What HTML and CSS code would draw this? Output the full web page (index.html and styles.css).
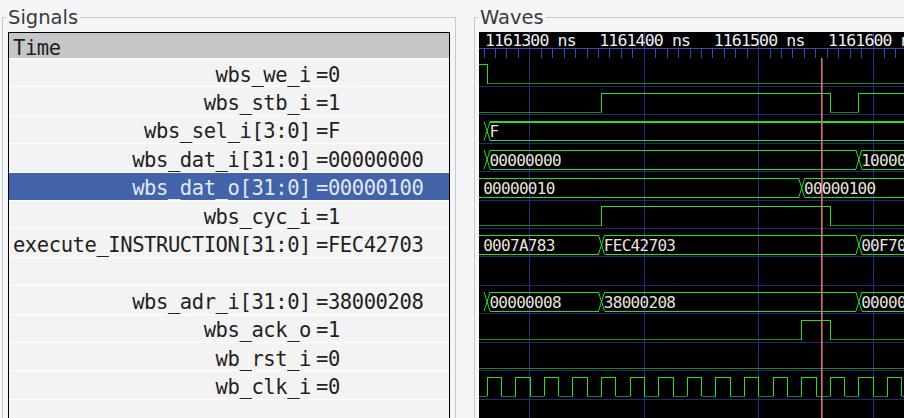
FILE: index.html
```html
<!DOCTYPE html>
<html>
<head>
<meta charset="utf-8">
<title>GTKWave</title>
<link rel="stylesheet" href="styles.css">
</head>
<body>
<div class="app">
  <fieldset class="frame signals">
    <legend>Signals</legend>
    <div class="list">
      <div class="hdr">Time</div>
      <div class="row"><span class="name">wbs_we_i</span><span class="val">=0</span></div>
      <div class="row"><span class="name">wbs_stb_i</span><span class="val">=1</span></div>
      <div class="row"><span class="name">wbs_sel_i[3:0]</span><span class="val">=F</span></div>
      <div class="row"><span class="name">wbs_dat_i[31:0]</span><span class="val">=00000000</span></div>
      <div class="row sel"><span class="name">wbs_dat_o[31:0]</span><span class="val">=00000100</span></div>
      <div class="row"><span class="name">wbs_cyc_i</span><span class="val">=1</span></div>
      <div class="row"><span class="name">execute_INSTRUCTION[31:0]</span><span class="val">=FEC42703</span></div>
      <div class="row"><span class="name"></span><span class="val"></span></div>
      <div class="row"><span class="name">wbs_adr_i[31:0]</span><span class="val">=38000208</span></div>
      <div class="row"><span class="name">wbs_ack_o</span><span class="val">=1</span></div>
      <div class="row"><span class="name">wb_rst_i</span><span class="val">=0</span></div>
      <div class="row"><span class="name">wb_clk_i</span><span class="val">=0</span></div>
      <div class="row"><span class="name"></span><span class="val"></span></div>
    </div>
  </fieldset>
  <fieldset class="frame waves">
    <legend>Waves</legend>
    <div class="wavebox">
      <svg class="wave" width="425" height="386" viewBox="479 32 425 386">
        <g shape-rendering="crispEdges">
          <path class="sep" d="M479 86.4H905M479 114.8H905M479 143.3H905M479 171.7H905M479 200.1H905M479 228.5H905M479 256.9H905M479 285.4H905M479 313.8H905M479 342.2H905M479 370.6H905M479 399H905"/>
          <path class="major" d="M529.8 32V418M644.2 32V418M758.6 32V418M873 32V418"/>
          <path class="tick" d="M479 48.5H905M484 49V58M495.4 49V58M506.9 49V58M518.4 49V58M541.2 49V58M552.7 49V58M564.1 49V58M575.6 49V58M587 49V58M598.4 49V58M609.9 49V58M621.3 49V58M632.8 49V58M655.6 49V58M667.1 49V58M678.5 49V58M690 49V58M701.4 49V58M712.8 49V58M724.3 49V58M735.7 49V58M747.2 49V58M770 49V58M781.5 49V58M792.9 49V58M804.4 49V58M815.8 49V58M827.2 49V58M838.7 49V58M850.1 49V58M861.6 49V58M884.4 49V58M895.9 49V58"/>
        </g>
        <g class="ruler">
          <text x="530.3" y="46">1161300 ns</text>
          <text x="644.7" y="46">1161400 ns</text>
          <text x="759.1" y="46">1161500 ns</text>
          <text x="873.5" y="46">1161600 ns</text>
        </g>
        <g shape-rendering="crispEdges">
          <path class="lo" d="M487.1 83.8H905M479 112.2H601.5M830.3 112.2H858.9M479 225.9H601.5M830.3 225.9H905M479 339.6H801.7M830.3 339.6H905M479 368H905M479 396.4H487.1M501.4 396.4H515.7M530 396.4H544.3M558.6 396.4H572.9M587.2 396.4H601.5M615.8 396.4H630.1M644.4 396.4H658.7M673 396.4H687.3M701.6 396.4H715.9M730.2 396.4H744.5M758.8 396.4H773.1M787.4 396.4H801.7M816 396.4H830.3M844.6 396.4H858.9M873.2 396.4H887.5M901.8 396.4H905"/>
          <path class="hi" d="M479 64.7H487.1V83.8M601.5 112.2V93.1H830.3V112.2M858.9 112.2V93.1H905M601.5 225.9V206.8H830.3V225.9M801.7 339.6V320.5H830.3V339.6M487.1 396.4V377.3H501.4V396.4M515.7 396.4V377.3H530V396.4M544.3 396.4V377.3H558.6V396.4M572.9 396.4V377.3H587.2V396.4M601.5 396.4V377.3H615.8V396.4M630.1 396.4V377.3H644.4V396.4M658.7 396.4V377.3H673V396.4M687.3 396.4V377.3H701.6V396.4M715.9 396.4V377.3H730.2V396.4M744.5 396.4V377.3H758.8V396.4M773.1 396.4V377.3H787.4V396.4M801.7 396.4V377.3H816V396.4M830.3 396.4V377.3H844.6V396.4M858.9 396.4V377.3H873.2V396.4M887.5 396.4V377.3H901.8V396.4"/>
          <path class="bus thick" d="M490.1 121.5H905"/>
          <path class="bus" d="M490.1 140.6H905M490.1 150H855.9M490.1 169.1H855.9M861.9 150H905M861.9 169.1H905M479 178.4H798.7M479 197.5H798.7M804.7 178.4H905M804.7 197.5H905M479 235.2H598.5M479 254.3H598.5M604.5 235.2H855.9M604.5 254.3H855.9M861.9 235.2H905M861.9 254.3H905M490.1 292.1H598.5M490.1 311.2H598.5M604.5 292.1H855.9M604.5 311.2H855.9M861.9 292.1H905M861.9 311.2H905"/>
        </g>
        <path class="bus" d="M484.1 121.5L490.1 140.6M484.1 140.6L490.1 121.5M484.1 150L490.1 169.1M484.1 169.1L490.1 150M855.9 150L861.9 169.1M855.9 169.1L861.9 150M798.7 178.4L804.7 197.5M798.7 197.5L804.7 178.4M598.5 235.2L604.5 254.3M598.5 254.3L604.5 235.2M855.9 235.2L861.9 254.3M855.9 254.3L861.9 235.2M484.1 292.1L490.1 311.2M484.1 311.2L490.1 292.1M598.5 292.1L604.5 311.2M598.5 311.2L604.5 292.1M855.9 292.1L861.9 311.2M855.9 311.2L861.9 292.1"/>
        <g class="vals">
          <text x="489.4" y="137.1">F</text>
          <text x="489.4" y="165.6">00000000</text>
          <text x="861.2" y="165.6">10000000</text>
          <text x="483.2" y="194">00000010</text>
          <text x="804" y="194">00000100</text>
          <text x="483.2" y="250.8">0007A783</text>
          <text x="603.8" y="250.8">FEC42703</text>
          <text x="861.2" y="250.8">00F70793</text>
          <text x="489.4" y="307.7">00000008</text>
          <text x="603.8" y="307.7">38000208</text>
          <text x="861.2" y="307.7">00000000</text>
        </g>
        <path class="cursor" d="M821.8 58V418"/>
      </svg>
    </div>
  </fieldset>
</div>
</body>
</html>
```
FILE: styles.css
```css
* { box-sizing: border-box; }
html, body { margin: 0; padding: 0; }
body {
  width: 904px;
  height: 418px;
  overflow: hidden;
  background: #f4f5f6;
  font-family: "DejaVu Sans", sans-serif;
}
.app {
  display: flex;
  align-items: flex-start;
  height: 418px;
  overflow: hidden;
}
.frame {
  margin: 5.5px 0 0 0;
  padding: 0;
  border: 1px solid #c6c9cf;
  min-width: 0;
  height: 440px;
  flex: none;
}
.frame > legend {
  font: 19.5px/24px "DejaVu Sans", sans-serif;
  color: #3a3a3a;
  padding: 0 2px 0 1px;
  margin-left: 4px;
}
.signals { margin-left: 2px; width: 454px; }
.waves { margin-left: 18px; width: 460px; }

.list {
  margin: 2.5px 5px 0 5px;
  height: 420px;
  border: 1px solid #000;
  background: #f3f3f3;
  font-family: "DejaVu Sans Mono", monospace;
  font-size: 20.5px;
  letter-spacing: -0.42px;
  color: #1f1f1f;
}
.hdr {
  height: 25px;
  padding: 5px 0 0 4px;
  line-height: 20px;
  background: #c6c6c6;
}
.row {
  display: grid;
  grid-template-columns: 302px 1fr;
  column-gap: 5px;
  height: 28.42px;
  padding-top: 5.6px;
  line-height: 21.8px;
  border-top: 1px solid #ffffff;
  white-space: nowrap;
}
.row .name { text-align: right; }
.row.sel { background: #4262a9; color: #e2e7f2; }

.wavebox {
  margin: 2.5px 0 0 4px;
  height: 420px;
  background: #000;
  overflow: hidden;
}
.wave { display: block; }
.sep { stroke: #25257c; stroke-width: 1; fill: none; }
.major { stroke: #2a2a88; stroke-width: 1; fill: none; }
.tick { stroke: #3a46b8; stroke-width: 1; fill: none; }
.ruler text {
  fill: #eeeeee;
  font-family: "DejaVu Sans Mono", monospace;
  font-size: 16.5px;
  letter-spacing: -0.85px;
  text-anchor: middle;
}
.lo { stroke: #168e16; stroke-width: 1; fill: none; }
.hi { stroke: #22e022; stroke-width: 1; fill: none; }
.bus { stroke: #22e022; stroke-width: 1; fill: none; }
.bus.thick { stroke-width: 2; }
.vals text {
  fill: #e8e4dc;
  font-family: "DejaVu Sans Mono", monospace;
  font-size: 16px;
  letter-spacing: -0.7px;
}
.cursor { stroke: #e87a76; stroke-width: 1.5; fill: none; }
```
